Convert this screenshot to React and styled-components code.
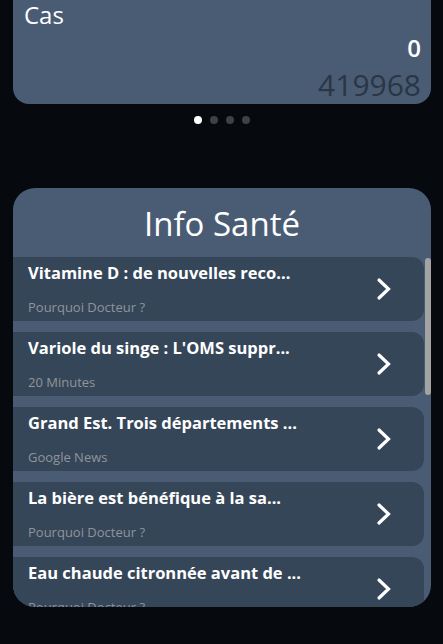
import styled, { createGlobalStyle } from 'styled-components';

const GlobalStyle = createGlobalStyle`
  html, body {
    margin: 0;
    padding: 0;
    background: #06090e;
  }
  body {
    font-family: "Open Sans", "DejaVu Sans", sans-serif;
    overflow: hidden;
  }
`;

const Page = styled.div`
  min-height: 100vh;
  padding: 0 12px 0 13px;
  display: flex;
  flex-direction: column;
`;

const StatCard = styled.div`
  margin-top: -20px;
  height: 124px;
  box-sizing: border-box;
  background: #4a5c74;
  border-radius: 16px;
  padding: 21px 10px 0 11px;
  display: flex;
  flex-direction: column;
`;

const StatLabel = styled.div`
  color: #fff;
  font-size: 24px;
  line-height: 28px;
`;

const StatValue = styled.div`
  text-align: right;
  color: ${p => (p.$muted ? '#2b3545' : '#fff')};
  font-size: ${p => (p.$muted ? '30px' : '24px')};
  font-weight: ${p => (p.$muted ? 500 : 600)};
  line-height: ${p => (p.$muted ? '36px' : '30px')};
  margin-top: 4px;
`;

const Dots = styled.div`
  display: flex;
  justify-content: center;
  gap: 8px;
  margin-top: 12px;
  padding-right: 1px;
`;

const Dot = styled.span`
  width: 8px;
  height: 8px;
  border-radius: 50%;
  background: ${p => (p.$active ? '#ffffff' : '#3e4247')};
`;

const InfoCard = styled.div`
  margin-top: 64px;
  height: 419px;
  background: #4a5c74;
  border-radius: 22px;
  overflow: hidden;
  display: flex;
  flex-direction: column;
`;

const InfoTitle = styled.h2`
  margin: 0;
  height: 69px;
  display: flex;
  align-items: center;
  justify-content: center;
  color: #fff;
  font-weight: 400;
  font-size: 33px;
  padding-top: 2px;
  box-sizing: border-box;
`;

const ListArea = styled.div`
  flex: 1;
  min-height: 0;
  display: flex;
`;

const List = styled.div`
  flex: 1;
  overflow-y: auto;
  display: flex;
  flex-direction: column;
  gap: 11px;
  scrollbar-width: none;

  &::-webkit-scrollbar {
    display: none;
  }
`;

const ScrollTrack = styled.div`
  width: 6px;
  flex: 0 0 6px;
  padding-top: 1px;
`;

const ScrollThumb = styled.div`
  height: 137px;
  background: #a3a3a3;
  border-radius: 3px;
`;

const Item = styled.div`
  flex: 0 0 64px;
  margin-right: 1px;
  background: #364659;
  border-radius: 0 12px 12px 0;
  display: flex;
  align-items: center;
  padding: 0 32px 0 15px;
`;

const ItemText = styled.div`
  flex: 1;
  display: flex;
  flex-direction: column;
  gap: 16px;
`;

const ItemTitle = styled.div`
  color: #fff;
  font-weight: 700;
  font-size: 16.5px;
  line-height: 20px;
  white-space: nowrap;
`;

const ItemSource = styled.div`
  color: #8f949b;
  font-size: 13px;
  line-height: 16px;
  white-space: nowrap;
`;

const Chevron = () => (
  <svg width="16" height="24" viewBox="0 0 16 24" fill="none">
    <polyline
      points="3,3 12.5,12 3,21"
      stroke="#fff"
      strokeWidth="3.2"
      strokeLinecap="round"
      strokeLinejoin="miter"
    />
  </svg>
);

const news = [
  { title: 'Vitamine D : de nouvelles reco...', source: 'Pourquoi Docteur ?' },
  { title: "Variole du singe : L'OMS suppr...", source: '20 Minutes' },
  { title: 'Grand Est. Trois départements ...', source: 'Google News' },
  { title: 'La bière est bénéfique à la sa...', source: 'Pourquoi Docteur ?' },
  { title: 'Eau chaude citronnée avant de ...', source: 'Pourquoi Docteur ?' },
  { title: 'Covid-19 : les nouveaux symptô...', source: 'Le Parisien' },
  { title: 'Grippe : le pic épidémique est ...', source: 'Google News' },
  { title: 'Sommeil : pourquoi il faut se c...', source: 'Pourquoi Docteur ?' },
  { title: 'Diabète : un nouveau traitemen...', source: '20 Minutes' },
  { title: 'Canicule : les bons réflexes po...', source: 'Google News' },
  { title: 'Cholestérol : ces aliments qui ...', source: 'Pourquoi Docteur ?' },
  { title: 'Vaccination : la campagne autom...', source: 'Le Figaro Santé' },
];

export default function App() {
  return (
    <>
      <GlobalStyle />
      <Page>
        <StatCard>
          <StatLabel>Cas</StatLabel>
          <StatValue>0</StatValue>
          <StatValue $muted>419968</StatValue>
        </StatCard>
        <Dots>
          <Dot $active />
          <Dot />
          <Dot />
          <Dot />
        </Dots>
        <InfoCard>
          <InfoTitle>Info Santé</InfoTitle>
          <ListArea>
            <List>
              {news.map((n, i) => (
                <Item key={i}>
                  <ItemText>
                    <ItemTitle>{n.title}</ItemTitle>
                    <ItemSource>{n.source}</ItemSource>
                  </ItemText>
                  <Chevron />
                </Item>
              ))}
            </List>
            <ScrollTrack>
              <ScrollThumb />
            </ScrollTrack>
          </ListArea>
        </InfoCard>
      </Page>
    </>
  );
}
